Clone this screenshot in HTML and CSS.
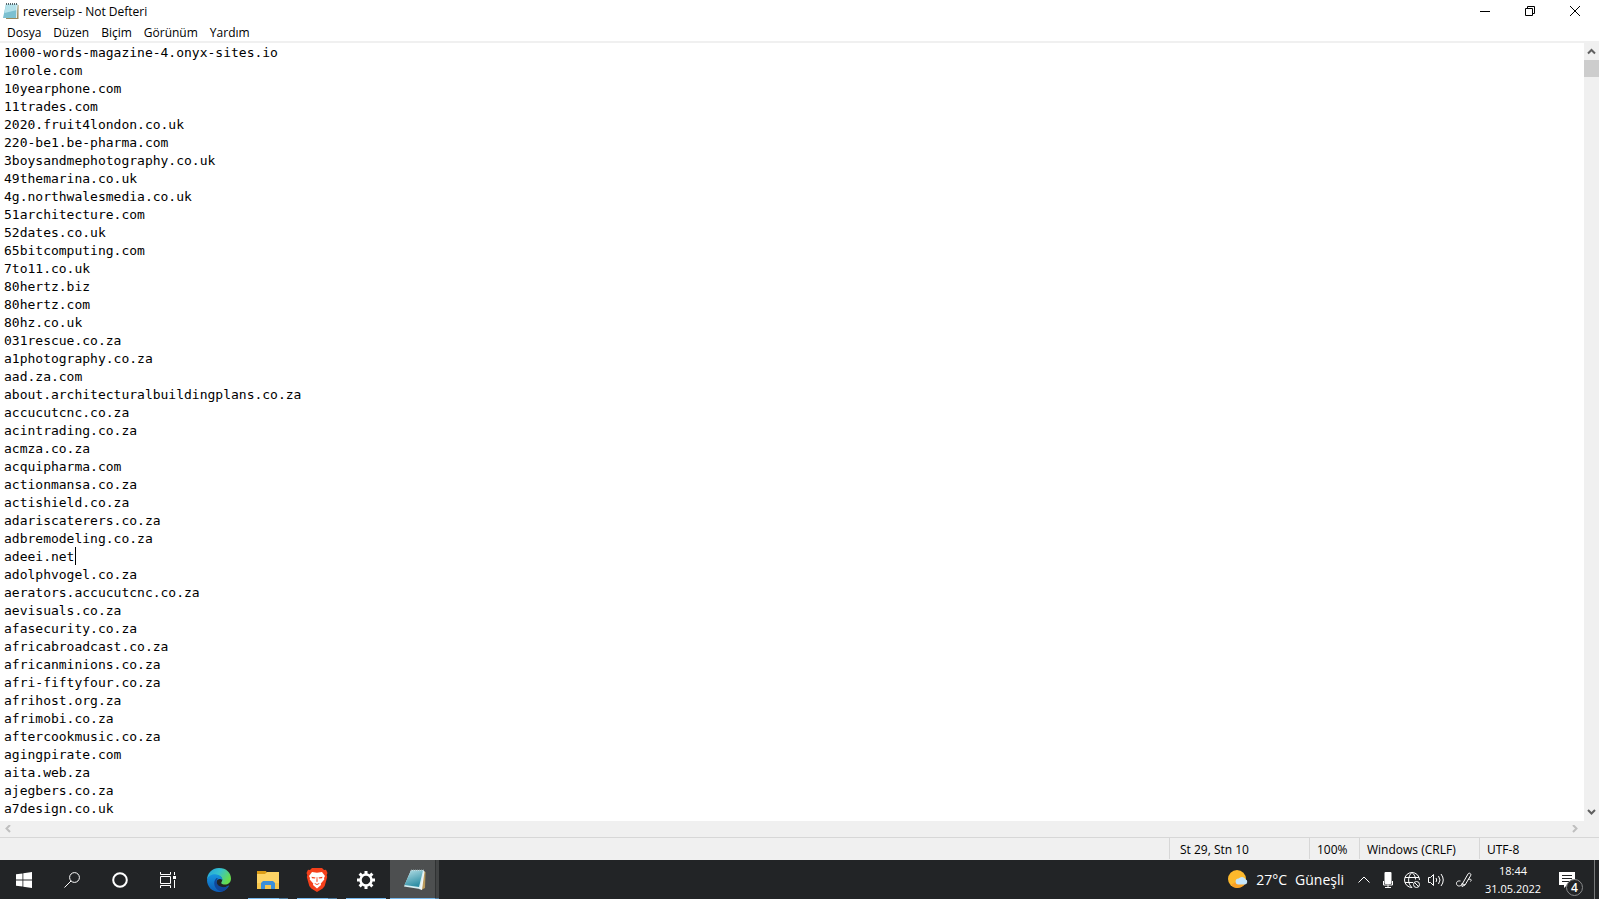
FILE: index.html
```html
<!DOCTYPE html>
<html lang="tr">
<head>
    <meta charset="UTF-8">
    <meta name="viewport" content="width=device-width, initial-scale=1.0">
    <title>reverseip - Not Defteri</title>
    <link rel="stylesheet" href="styles.css">
</head>
<body>
    <main class="window">
        <header class="title-bar">
            <svg class="app-icon" viewBox="0 0 16 18">
                <path d="M4 3h11.500v14H3z" fill="#9a8a5c"/>
                <path d="M3 2h11.500L13 16H0z" fill="#7cc0d0"/>
                <path d="M3 2h11.500L14 8 1.500 11z" fill="#b4e1ea"/>
                <path d="M13.500 3h1L14 16h-1z" fill="#e9f4f5"/>
                <path d="M3 2h12" stroke="#56666b" stroke-width="2" stroke-dasharray="1 1"/>
            </svg>
            <h1>reverseip - Not Defteri</h1>
            <div class="window-buttons">
                <button type="button" aria-label="Simge durumuna küçült">
                    <svg viewBox="0 0 10 10"><path d="M0 5.500h10"/></svg>
                </button>
                <button type="button" aria-label="Önceki boyut">
                    <svg viewBox="0 0 10 10"><path d="M.5 2.500h7v7h-7zM2.500 2.500v-2h7v7h-2"/></svg>
                </button>
                <button type="button" aria-label="Kapat">
                    <svg viewBox="0 0 10 10"><path d="M0 0l10 10M10 0L0 10"/></svg>
                </button>
            </div>
        </header>
        <nav class="menu-bar">
            <button type="button">Dosya</button>
            <button type="button">Düzen</button>
            <button type="button">Biçim</button>
            <button type="button">Görünüm</button>
            <button type="button">Yardım</button>
        </nav>
        <div class="editor">
            <div class="page">
                <textarea aria-label="Metin düzenleyici" spellcheck="false" wrap="off">1000-words-magazine-4.onyx-sites.io
10role.com
10yearphone.com
11trades.com
2020.fruit4london.co.uk
220-be1.be-pharma.com
3boysandmephotography.co.uk
49themarina.co.uk
4g.northwalesmedia.co.uk
51architecture.com
52dates.co.uk
65bitcomputing.com
7to11.co.uk
80hertz.biz
80hertz.com
80hz.co.uk
031rescue.co.za
a1photography.co.za
aad.za.com
about.architecturalbuildingplans.co.za
accucutcnc.co.za
acintrading.co.za
acmza.co.za
acquipharma.com
actionmansa.co.za
actishield.co.za
adariscaterers.co.za
adbremodeling.co.za
adeei.net
adolphvogel.co.za
aerators.accucutcnc.co.za
aevisuals.co.za
afasecurity.co.za
africabroadcast.co.za
africanminions.co.za
afri-fiftyfour.co.za
afrihost.org.za
afrimobi.co.za
aftercookmusic.co.za
agingpirate.com
aita.web.za
ajegbers.co.za
a7design.co.uk</textarea>
                <span class="caret"></span>
            </div>
            <div class="scroll-y">
                <button type="button" aria-label="Yukarı"><svg viewBox="0 0 9 9"><path d="M1 6.500L4.500 3 8 6.500"/></svg></button>
                <div class="thumb"></div>
                <button type="button" aria-label="Aşağı"><svg viewBox="0 0 9 9"><path d="M1 2l3.500 3.500L8 2"/></svg></button>
            </div>
            <div class="scroll-x">
                <button type="button" aria-label="Sola" disabled><svg viewBox="0 0 9 9"><path d="M6 0L2.500 3.500 6 7"/></svg></button>
                <button type="button" aria-label="Sağa" disabled><svg viewBox="0 0 9 9"><path d="M2 0l3.500 3.500L2 7"/></svg></button>
            </div>
        </div>
        <footer class="status-bar">
            <span class="position">St 29, Stn 10</span>
            <span class="zoom">100%</span>
            <span class="line-ending">Windows (CRLF)</span>
            <span class="encoding">UTF-8</span>
        </footer>
    </main>

    <div class="taskbar">
        <div class="pinned">
            <button type="button" aria-label="Başlat">
                <svg class="icon-small" viewBox="0 0 16 16"><path d="M0 2.300l6.500-.9v6.100H0zM7.300 1.300L16 0v7.500H7.300zM0 8.400h6.500v6.200L0 13.700zM7.300 8.400H16V16l-8.700-1.200z" fill="#fff"/></svg>
            </button>
            <button type="button" aria-label="Ara">
                <svg class="icon-small line" viewBox="0 0 16 16"><circle cx="10.500" cy="5.500" r="4.900"/><path d="M7 9L.5 15.500"/></svg>
            </button>
            <button type="button" aria-label="Cortana">
                <svg class="icon-small line" viewBox="0 0 16 16"><circle cx="8" cy="8" r="6.800" stroke-width="2"/></svg>
            </button>
            <button type="button" aria-label="Görev görünümü">
                <svg class="icon-small line" viewBox="0 0 16 16"><path d="M.5 0v2.500h10V0M.5 4.500h10v7H.5zM.5 16v-2.500h10V16M14.500 0v3M14.500 8v8"/><path d="M13 4h3v3h-3z" fill="#fff" stroke="none"/></svg>
            </button>
        </div>
        <div class="apps">
            <button type="button" aria-label="Microsoft Edge">
                <svg class="icon" viewBox="0 0 24 24">
                    <defs>
                        <linearGradient id="edge-top" x1="0" y1="0" x2="1" y2=".5"><stop offset="0" stop-color="#229fd8"/><stop offset=".5" stop-color="#35c1d0"/><stop offset="1" stop-color="#66dc4e"/></linearGradient>
                        <linearGradient id="edge-left" x1="0" y1="0" x2="0" y2="1"><stop offset="0" stop-color="#1795df"/><stop offset="1" stop-color="#0c5cb5"/></linearGradient>
                    </defs>
                    <path d="M0 12C0 6 4.500 0 12 0s12 5 12 10.500c0 4-3 6-6 6-3.500 0-4.300-1.500-3.300-2.800C16.500 11 14 8 10.500 7.500 5.500 6.500 1 9 0 12z" fill="url(#edge-top)"/>
                    <path d="M0 12c1-4 5-6.500 9.500-5.500C13 7 15.800 9.500 15.300 12c-2-2-5.500-1-5.800 2-.3 4 4.500 6.500 8 5.500 2-.5 3.500-2 4.500-2-2 4-6 6.500-10 6.500C5.500 24 0 19 0 12z" fill="url(#edge-left)"/>
                    <path d="M9.500 10C5 14 7.500 22 14.500 23.700c3.500-.7 6-3 7.500-6.200-5 3.500-12 1-12.500-3.500-.1-1.500.5-2.500 1.500-3.500z" fill="#11479a"/>
                </svg>
            </button>
            <button type="button" class="running stacked" aria-label="Dosya Gezgini">
                <svg class="icon" viewBox="0 0 24 24">
                    <path d="M1 3h9l1 2v4H1z" fill="#dc9c16"/>
                    <path d="M1 6h8l2-2h12v17H1z" fill="#fdd365"/>
                    <path d="M1 15h22v6H1z" fill="#f7c64c"/>
                    <path d="M5 21v-6l2-2h10l2 2v6h-4v-4H9v4z" fill="#3b8fd9"/>
                </svg>
            </button>
            <button type="button" class="running stacked" aria-label="Brave">
                <svg class="icon" viewBox="0 0 24 24">
                    <path d="M7 0h10l2 2 2-.3L22.500 5l-.8 2 .5 2-2.500 9-2 2.500L12 24l-5.700-3.500-2-2.500-2.500-9 .5-2-.8-2L3 1.700 5 2z" fill="#f4401b"/>
                    <path d="M7 4l5 .8L17 4l3 4-1 2 .3 1.500-3.500 4 .2 1.500-4 3.500-4-3.500.2-1.500-3.500-4L5 10 4 8z" fill="#fff"/>
                    <path d="M6.500 8.800l4 .6-.5 1.200-3-.4zM17.500 8.800l-4 .6.5 1.200 3-.4zM11.700 9h.6l.3 4.500-.6.6-.6-.6zM9.500 15l2.500 1 2.500-1-.5 1-2 1-2-1z" fill="#f4401b"/>
                </svg>
            </button>
            <button type="button" class="running" aria-label="Ayarlar">
                <svg class="icon" viewBox="0 0 24 24">
                    <circle cx="12" cy="12" r="5.500" fill="none" stroke="#fff" stroke-width="2.500"/>
                    <path d="M12 3v3M12 18v3M3 12h3M18 12h3M5.600 5.600l2.200 2.200M16.200 16.200l2.200 2.200M5.600 18.400l2.200-2.200M16.200 7.800l2.200-2.200" stroke="#fff" stroke-width="3"/>
                </svg>
            </button>
            <button type="button" class="running stacked active" aria-label="Not Defteri">
                <svg class="icon" viewBox="0 0 24 24">
                    <defs>
                        <linearGradient id="note" x1="0" y1="0" x2=".4" y2="1"><stop offset="0" stop-color="#b5dfe6"/><stop offset="1" stop-color="#2f8fa5"/></linearGradient>
                    </defs>
                    <path d="M20 3l2.500 1-.5 16-4 2z" fill="#b9995b"/>
                    <path d="M20 2l1.500 1.500L19 22l-3-1z" fill="#f2f7f7"/>
                    <path d="M8 2h13l-4 19-16-2.500z" fill="#d6eef2"/>
                    <path d="M8 2.500h12L16 19 1.500 17z" fill="url(#note)"/>
                    <path d="M8 2h13" stroke="#8b9a9c" stroke-dasharray="1 1"/>
                </svg>
            </button>
        </div>

        <div class="tray">
            <button type="button" class="weather">
                <svg viewBox="0 0 20 20">
                    <circle cx="9" cy="9" r="9" fill="#fdb92c"/>
                    <path d="M3 15a9 9 0 0 0 14-1L9 11z" fill="#f9a126"/>
                    <path d="M10.500 14.500a3 3 0 0 1 .2-6 4 4 0 0 1 6.800.8 2.700 2.700 0 0 1-.5 5.200z" fill="#c4e5fb"/>
                </svg>
                <span>27°C</span>
                <span>Güneşli</span>
            </button>
            <button type="button" aria-label="Gizli simgeleri göster">
                <svg class="icon-small line" viewBox="0 0 16 16"><path d="M2.500 10.500L8 5l5.500 5.500"/></svg>
            </button>
            <button type="button" aria-label="Mikrofon">
                <svg class="icon-small line" viewBox="0 0 16 16"><rect x="4.500" y="0" width="7" height="12" rx="1" fill="#fff" stroke="none"/><path d="M3.500 9v4h9V9M8 12.500V15M5 15.500h6"/></svg>
            </button>
            <button type="button" aria-label="Ağ">
                <svg class="icon-small line" viewBox="0 0 16 16"><path d="M8 15.500A7.500 7.500 0 1 1 15.500 8M8 15.500C3.500 12 3.500 4 8 .5c2.500 2 3.500 4.500 3.500 7M1 5.500h14M1 10.500h8"/><circle cx="12.500" cy="12.500" r="3"/><path d="M10.500 10.500l4 4"/></svg>
            </button>
            <button type="button" aria-label="Ses">
                <svg class="icon-small line" viewBox="0 0 16 16"><path d="M.5 5.500h2l3-3v11l-3-3h-2zM8 6q1.500 2 0 4M10.500 4q3 4 0 8M13 2q4.500 6 0 12"/></svg>
            </button>
            <button type="button" class="pen" aria-label="Windows Ink">
                <svg class="icon-small line" viewBox="0 0 16 16"><path d="M4.500 9C1 8.500 0 10.500.7 12.500c1 2.500 4.300 1.500 5.300 0L12 2c1-2 4 0 2.500 1.800L9 13l-3 1.500-.2-3M6 11.500l3 1.500M12 7.500c3-1 4 .5 2.500 2"/></svg>
            </button>
            <button type="button" class="clock">
                <time>18:44</time>
                <time>31.05.2022</time>
            </button>
            <button type="button" class="notifications" aria-label="Bildirimler">
                <svg viewBox="0 0 16 16"><path d="M0 0h16v13H8l-3 3v-3H0z" fill="#fff"/><path d="M3 3.500h10M3 6.500h10M3 9.500h7" stroke="#222426"/></svg>
                <span class="badge">4</span>
            </button>
            <button type="button" class="show-desktop" aria-label="Masaüstünü göster"></button>
        </div>
    </div>
</body>
</html>
```
FILE: styles.css
```css
* {
    box-sizing: border-box;
}

body {
    display: flex;
    flex-direction: column;
    height: 100vh;
    margin: 0;
    overflow: hidden;
    font-family: "Open Sans", sans-serif;
    font-size: 12px;
    color: #000;
    background-color: #fff;
}

button {
    display: flex;
    align-items: center;
    justify-content: center;
    padding: 0;
    border: none;
    background: none;
    color: inherit;
    font: inherit;
}

svg {
    flex: none;
}

/* Notepad window */
.window {
    display: flex;
    flex: 1;
    flex-direction: column;
    min-height: 0;
}

.title-bar {
    display: flex;
    align-items: center;
    height: 22px;
    padding-left: 3px;
}

.app-icon {
    width: 16px;
    height: 18px;
}

h1 {
    margin: 0 0 0 4px;
    font-size: 12px;
    font-weight: normal;
}

.window-buttons {
    display: flex;
    margin-left: auto;
    padding-right: 2px;
}

.window-buttons button {
    width: 45px;
    height: 22px;
}

.window-buttons svg {
    width: 10px;
    height: 10px;
    fill: none;
    stroke: #000;
}

.menu-bar {
    display: flex;
    height: 21px;
    padding: 1px 1px 0;
    border-bottom: 2px solid #f0f0f0;
}

.menu-bar button {
    padding: 0 6px;
}

.editor {
    display: grid;
    flex: 1;
    grid-template-columns: 1fr 15px;
    grid-template-rows: 1fr 16px;
    min-height: 0;
}

.page {
    position: relative;
    font-family: "DejaVu Sans Mono", monospace;
    font-size: 13px;
    line-height: 18px;
}

textarea {
    display: block;
    width: 100%;
    height: 100%;
    padding: 1px 4px 0;
    border: none;
    outline: none;
    overflow: hidden;
    resize: none;
    color: #000;
    font: inherit;
}

/* line 29, column 10 */
.caret {
    position: absolute;
    top: calc(28 * 18px);
    left: calc(5px + 9ch);
    width: 1px;
    height: 18px;
    background-color: #000;
}

.scroll-y {
    display: flex;
    grid-row: span 2;
    flex-direction: column;
    padding-bottom: 16px;
    background-color: #f0f0f0;
}

.scroll-y button {
    height: 17px;
}

.scroll-y button:last-child {
    margin-top: auto;
}

.thumb {
    height: 17px;
    background-color: #cdcdcd;
}

.scroll-x {
    display: flex;
    justify-content: space-between;
    background-color: #f0f0f0;
}

.scroll-x button {
    width: 17px;
}

.scroll-y svg,
.scroll-x svg {
    width: 9px;
    height: 9px;
    fill: none;
    stroke: #606060;
    stroke-width: 2;
}

.scroll-x svg {
    stroke: #bfbfbf;
}

.status-bar {
    display: flex;
    justify-content: flex-end;
    height: 23px;
    border-top: 1px solid #d7d7d7;
    background-color: #f0f0f0;
    line-height: 24px;
}

.status-bar span {
    height: 21px;
    padding-left: 7px;
    border-left: 1px solid #d7d7d7;
}

.status-bar .position {
    width: 140px;
    padding-left: 10px;
}

.status-bar .zoom {
    width: 50px;
}

.status-bar .line-ending {
    width: 120px;
}

.status-bar .encoding {
    width: 120px;
}

/* Taskbar */
.taskbar {
    display: flex;
    height: 39px;
    background-color: #222426;
    color: #fff;
}

.pinned,
.apps,
.tray {
    display: flex;
}

.pinned button {
    width: 48px;
}

.apps {
    margin-left: 2px;
}

.apps button {
    position: relative;
    width: 49px;
}

.icon-small {
    width: 16px;
    height: 16px;
}

.line {
    fill: none;
    stroke: #fff;
}

.icon {
    width: 24px;
    height: 24px;
}

.running::after {
    content: "";
    position: absolute;
    bottom: 0;
    left: 5px;
    width: 40px;
    height: 1px;
    background-color: #76b9ed;
}

.stacked::after {
    background: linear-gradient(to right, #76b9ed 31px, #4f7da1 31px);
}

.apps .active {
    background: linear-gradient(to right, #4d4f50 45px, #303233 45px, #303233 46px, #424445 46px);
}

.active::after {
    left: 0;
    width: 49px;
    background: linear-gradient(to right, #76b9ed 45px, #4f7da1 45px);
}

.tray {
    margin-left: auto;
}

.tray button {
    width: 24px;
}

.tray .weather {
    gap: 8px;
    width: auto;
    margin-right: 8px;
    font-size: 14px;
}

.weather svg {
    width: 20px;
    height: 20px;
}

.tray .pen {
    width: 32px;
}

.tray .clock {
    flex-direction: column;
    width: 66px;
    font-size: 11px;
    line-height: 18px;
}

.tray .notifications {
    position: relative;
    justify-content: flex-start;
    width: 48px;
    padding-left: 13px;
}

.notifications svg {
    width: 16px;
    height: 16px;
}

.badge {
    position: absolute;
    right: 11px;
    bottom: 3px;
    width: 17px;
    height: 17px;
    border: 1px solid #8a8b8c;
    border-radius: 50%;
    background-color: #222426;
    font-weight: 600;
    line-height: 15px;
}

.tray .show-desktop {
    width: 5px;
    border-left: 1px solid #77797a;
}
```
